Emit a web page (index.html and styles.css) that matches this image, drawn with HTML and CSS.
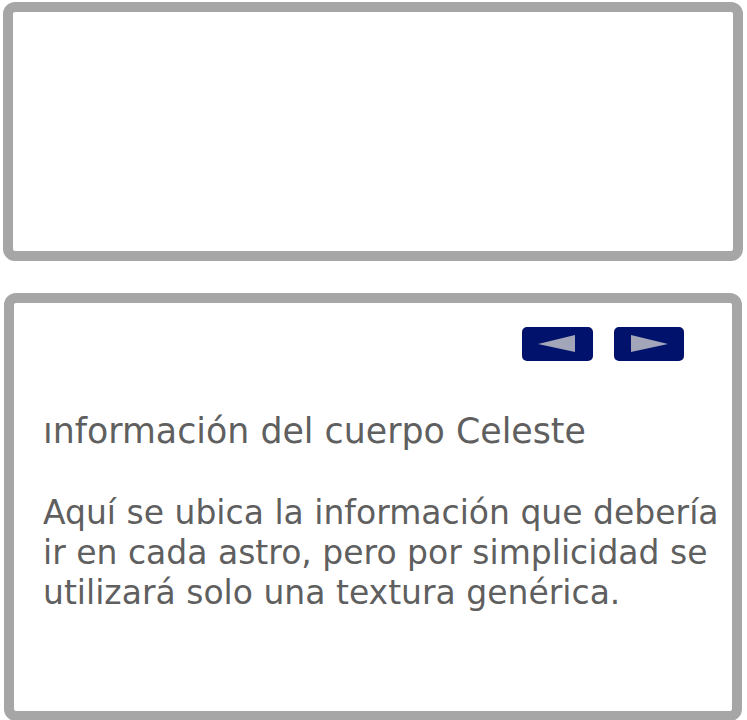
FILE: index.html
```html
<!DOCTYPE html>
<html lang="es">
<head>
<meta charset="utf-8">
<link rel="stylesheet" href="styles.css">
</head>
<body>
<div class="box box-top"></div>
<div class="box box-info">
  <div class="nav">
    <button class="nav-btn" aria-label="Anterior">
      <svg width="71" height="34" viewBox="0 0 71 34"><polygon points="16,17 53,8 53,25" fill="#a3a5b9"/></svg>
    </button>
    <button class="nav-btn" aria-label="Siguiente">
      <svg width="70" height="34" viewBox="0 0 70 34"><polygon points="17,8 54,17 17,25" fill="#a3a5b9"/></svg>
    </button>
  </div>
  <h1 class="title">ınformación del cuerpo Celeste</h1>
  <p class="desc">Aquí se ubica la información que debería<br>ir en cada astro, pero por simplicidad se<br>utilizará solo una textura genérica.</p>
</div>
</body>
</html>
```
FILE: styles.css
```css
html, body {
  margin: 0;
  padding: 0;
  background: #ffffff;
}
body {
  font-family: "DejaVu Sans", sans-serif;
  color: #5f5f5f;
}
.box {
  box-sizing: border-box;
  border: 10px solid #a6a6a6;
  border-radius: 12px;
  background: #ffffff;
}
.box-top {
  margin: 2px 0 0 3px;
  width: 740px;
  height: 259px;
}
.box-info {
  margin: 32px 0 0 4px;
  width: 738px;
  height: 428px;
  padding: 24px 48px 0 29px;
}
.nav {
  display: flex;
  justify-content: flex-end;
  gap: 21px;
}
.nav-btn {
  display: block;
  margin: 0;
  padding: 0;
  border: none;
  background: #00126b;
  border-radius: 5px;
  height: 34px;
  line-height: 0;
}
.nav-btn:first-child { width: 71px; }
.nav-btn:last-child { width: 70px; }
.nav-btn svg { display: block; }
.title {
  margin: 50px 0 0 0;
  font-size: 34.8px;
  font-weight: normal;
  line-height: 40px;
  white-space: nowrap;
}
.desc {
  margin: 42px 0 0 0;
  font-size: 33px;
  line-height: 40px;
  white-space: nowrap;
}
```
